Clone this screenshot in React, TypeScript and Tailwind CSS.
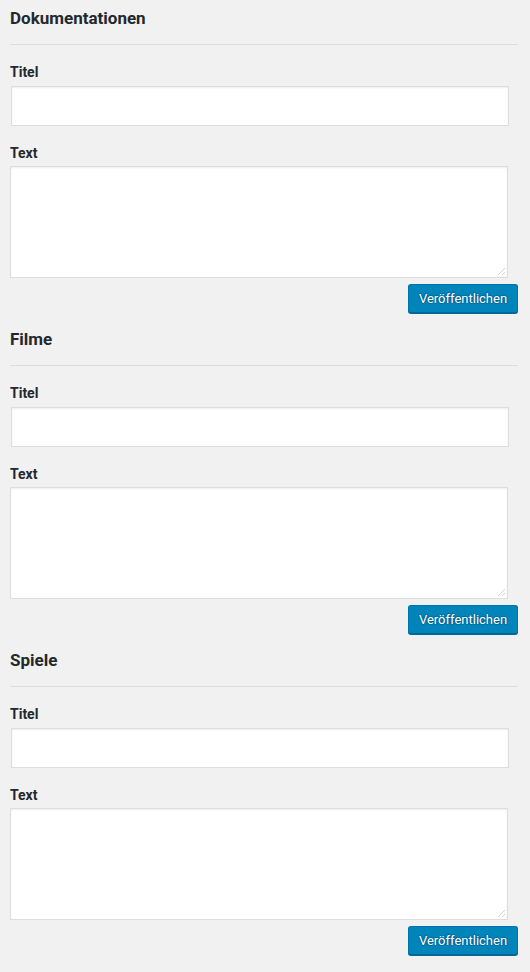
const sections = ["Dokumentationen", "Filme", "Spiele"];

const Section = ({ title }: { title: string }) => (
  <section className="pt-[8px] pb-[8px]">
    <h2 className="text-[17px] leading-[20px] font-bold text-[#23282d]">
      {title}
    </h2>
    <hr className="mt-[16px] mr-[2px] border-0 border-t border-[#dddddd]" />
    <label className="block mt-[17px] text-[14px] leading-[20px] font-bold text-[#23282d]">
      Titel
    </label>
    <input
      type="text"
      className="block mt-[4px] ml-[1px] h-[40px] w-[498px] bg-white border border-[#dddddd] shadow-[inset_0_1px_2px_rgba(0,0,0,0.07)] outline-none px-2"
    />
    <label className="block mt-[17px] text-[14px] leading-[20px] font-bold text-[#23282d]">
      Text
    </label>
    <div className="relative mt-[3px] w-[498px]">
      <textarea className="block h-[112px] w-[498px] resize-none bg-white border border-[#dddddd] shadow-[inset_0_1px_2px_rgba(0,0,0,0.07)] outline-none p-2" />
      {/* faint resize grip */}
      <svg
        className="absolute right-[2px] bottom-[2px]"
        width="9"
        height="9"
        viewBox="0 0 9 9"
      >
        <path d="M8 1L1 8M8 5L5 8" stroke="#d4d4d4" strokeWidth="1" />
      </svg>
    </div>
    <div className="flex justify-end mt-[6px] mr-[2px]">
      <button
        type="button"
        className="h-[29px] w-[110px] rounded-[3px] bg-[#0085ba] border border-[#0073aa] border-b-[#006799] shadow-[0_1px_0_#006799] text-white text-[13px] leading-[26px] [text-shadow:0_-1px_1px_#006799,1px_0_1px_#006799,0_1px_1px_#006799,-1px_0_1px_#006799]"
      >
        Veröffentlichen
      </button>
    </div>
  </section>
);

export default function App() {
  return (
    <main
      className="min-h-[972px] w-[530px] bg-[#f1f1f1] pl-[10px] pr-[10px]"
      style={{ fontFamily: "Roboto, 'Liberation Sans', sans-serif" }}
    >
      {sections.map((s) => (
        <Section key={s} title={s} />
      ))}
    </main>
  );
}
